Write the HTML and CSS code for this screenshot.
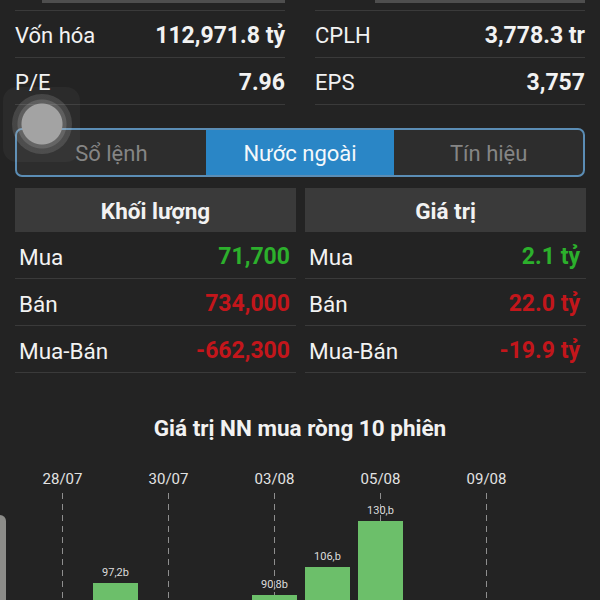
FILE: index.html
```html
<!DOCTYPE html>
<html lang="vi">
  <head>
    <meta charset="UTF-8" />
    <meta name="viewport" content="width=device-width, initial-scale=1.0" />
    <title>Nước ngoài</title>
    <link rel="stylesheet" href="styles.css">
  </head>
  <body>
    <div class="screen">
      <!-- phần đuôi của khối phía trên -->
      <div class="top_strip">
        <span class="strip_left"></span>
        <span class="strip_right"></span>
      </div>

      <!-- chỉ số cơ bản -->
      <div class="info_box">
        <div class="info_col">
          <div class="info_row"><span>Vốn hóa</span><b>112,971.8 tỷ</b></div>
          <div class="info_row"><span>P/E</span><b>7.96</b></div>
        </div>
        <div class="info_col">
          <div class="info_row"><span>CPLH</span><b>3,778.3 tr</b></div>
          <div class="info_row"><span>EPS</span><b>3,757</b></div>
        </div>
      </div>

      <!-- tab -->
      <div class="tab_bar">
        <div class="tab">Sổ lệnh</div>
        <div class="tab active">Nước ngoài</div>
        <div class="tab">Tín hiệu</div>
      </div>

      <!-- khối lượng / giá trị -->
      <div class="stat_box">
        <div class="stat_col">
          <div class="stat_head">Khối lượng</div>
          <div class="stat_row"><span>Mua</span><b class="up">71,700</b></div>
          <div class="stat_row"><span>Bán</span><b class="down">734,000</b></div>
          <div class="stat_row"><span>Mua-Bán</span><b class="down">-662,300</b></div>
        </div>
        <div class="stat_col">
          <div class="stat_head">Giá trị</div>
          <div class="stat_row"><span>Mua</span><b class="up">2.1 tỷ</b></div>
          <div class="stat_row"><span>Bán</span><b class="down">22.0 tỷ</b></div>
          <div class="stat_row"><span>Mua-Bán</span><b class="down">-19.9 tỷ</b></div>
        </div>
      </div>

      <!-- biểu đồ -->
      <div class="chart_title">Giá trị NN mua ròng 10 phiên</div>
      <div class="chart">
        <div class="session line"><div class="date">28/07</div><div class="plot"></div></div>
        <div class="session"><div class="date"></div><div class="plot"><span class="bar_label">97,2b</span><span class="bar" style="height:184px"></span></div></div>
        <div class="session line"><div class="date">30/07</div><div class="plot"></div></div>
        <div class="session"><div class="date"></div><div class="plot"></div></div>
        <div class="session line"><div class="date">03/08</div><div class="plot"><span class="bar_label">90,8b</span><span class="bar" style="height:172px"></span></div></div>
        <div class="session"><div class="date"></div><div class="plot"><span class="bar_label">106,b</span><span class="bar" style="height:200px"></span></div></div>
        <div class="session line"><div class="date">05/08</div><div class="plot"><span class="bar_label">130,b</span><span class="bar" style="height:246px"></span></div></div>
        <div class="session"><div class="date"></div><div class="plot"></div></div>
        <div class="session line"><div class="date">09/08</div><div class="plot"></div></div>
        <div class="session"><div class="date"></div><div class="plot"></div></div>
      </div>

      <!-- lớp phủ: điểm chạm và tay cầm -->
      <div class="touch_area"></div>
      <div class="touch_dot"></div>
      <div class="edge_handle"></div>
    </div>
  </body>
</html>
```

FILE: styles.css
```css
  * {
    box-sizing: border-box;
  }
  html, body {
    margin: 0;
    background: #232323;
  }
  body {
    font-family: Roboto, "Noto Sans", sans-serif;
    color: #f2f2f2;
  }
  .screen {
    position: relative;
    width: 600px;
    height: 600px;
    overflow: hidden;
  }

  /* phần trên */
  .top_strip {
    display: flex;
    height: 3px;
  }
  .strip_left {
    margin-left: 42px;
    width: 243px;
    background: #4e4e4e;
  }
  .strip_right {
    margin-left: 90px;
    width: 210px;
    background: #4e4e4e;
  }

  .info_box {
    display: flex;
    gap: 30px;
    padding: 0 15px;
    margin-top: 7px;
  }
  .info_col {
    flex: 1;
    border-top: 1px solid #3a3a3a;
  }
  .info_row {
    display: flex;
    justify-content: space-between;
    align-items: center;
    height: 47px;
    padding-top: 2px;
    border-bottom: 1px solid #3a3a3a;
    font-size: 22px;
  }
  .info_row b {
    font-size: 23px;
  }

  /* tab */
  .tab_bar {
    display: flex;
    margin: 23px 15px 0;
    height: 49px;
    border: 2px solid #5b8db5;
    border-radius: 7px;
    overflow: hidden;
    background: #2d2d2d;
  }
  .tab {
    flex: 1;
    display: flex;
    align-items: center;
    justify-content: center;
    padding-top: 2px;
    font-size: 22px;
    color: #858585;
  }
  .tab.active {
    background: #2a86c6;
    color: #f4f8fb;
  }

  /* khối lượng / giá trị */
  .stat_box {
    display: flex;
    gap: 9px;
    margin: 11px 14px 0 15px;
  }
  .stat_col {
    flex: 1;
  }
  .stat_head {
    height: 44px;
    line-height: 46px;
    text-align: center;
    background: #3a3a3a;
    font-size: 22.5px;
    font-weight: bold;
  }
  .stat_row {
    display: flex;
    justify-content: space-between;
    align-items: center;
    height: 47px;
    padding: 3px 6px 0 4px;
    border-bottom: 1px solid #3a3a3a;
    font-size: 22.5px;
  }
  .stat_row b {
    font-size: 23px;
  }
  .up {
    color: #2cb02c;
  }
  .down {
    color: #c3161b;
  }

  /* biểu đồ */
  .chart_title {
    margin-top: 42px;
    line-height: 26px;
    text-align: center;
    font-size: 22.5px;
    font-weight: bold;
  }
  .chart {
    display: grid;
    grid-template-columns: repeat(10, 53px);
    padding-left: 36px;
    margin-top: 28px;
  }
  .session {
    display: flex;
    flex-direction: column;
    align-items: center;
  }
  .date {
    height: 20px;
    line-height: 20px;
    font-size: 15px;
    color: #e2e2e2;
  }
  .plot {
    margin-top: 4px;
    width: 100%;
    height: 274px;
    display: flex;
    flex-direction: column;
    justify-content: flex-end;
    align-items: center;
  }
  .line .plot {
    background-image: linear-gradient(#8e8e8e 6px, transparent 6px);
    background-size: 1px 11px;
    background-repeat: repeat-y;
    background-position: center top;
  }
  .bar_label {
    font-size: 11px;
    line-height: 14px;
    margin-bottom: 3px;
    color: #dcdcdc;
  }
  .bar {
    display: block;
    width: 45px;
    background: #6cbf6a;
  }

  /* lớp phủ */
  .touch_area {
    position: absolute;
    left: 3px;
    top: 87px;
    width: 77px;
    height: 75px;
    border-radius: 14px;
    background: rgba(255, 255, 255, 0.04);
  }
  .touch_dot {
    position: absolute;
    left: 12px;
    top: 94px;
    width: 60px;
    height: 60px;
    border-radius: 50%;
    background: radial-gradient(circle, #a3a3a3 0 20px, rgba(190, 190, 190, 0.35) 21px 24px, rgba(190, 190, 190, 0.18) 25px 30px);
  }
  .edge_handle {
    position: absolute;
    left: 0;
    top: 515px;
    width: 6px;
    height: 100px;
    border-radius: 0 6px 0 0;
    background: #8c8c89;
  }
```
